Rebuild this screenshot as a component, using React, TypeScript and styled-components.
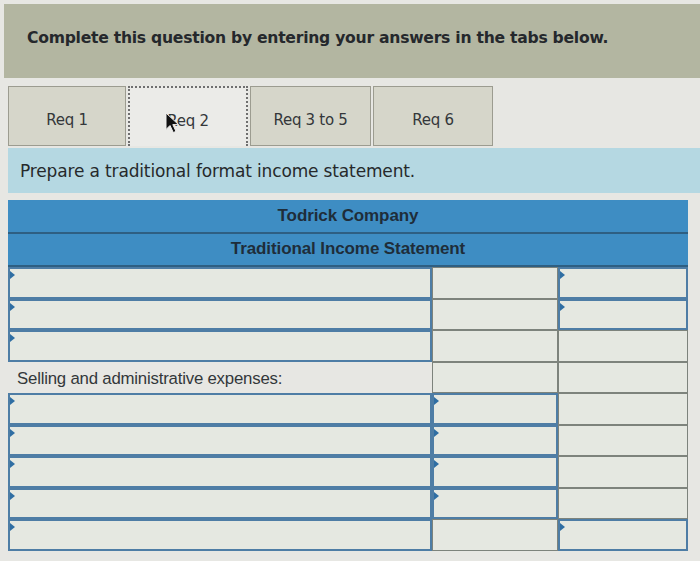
import React from "react";
import styled, { createGlobalStyle } from "styled-components";

const Global = createGlobalStyle`
  html, body { margin: 0; padding: 0; background: #e7e7e3; }
  body { font-family: "Liberation Sans", Arial, sans-serif; }
`;

const Page = styled.div`
  width: 700px;
  height: 561px;
  overflow: hidden;
  background: #e7e7e3;
  padding-top: 4px;
  box-sizing: border-box;
`;

const Banner = styled.div`
  margin-left: 4px;
  height: 74px;
  background: #b3b6a1;
  display: flex;
  align-items: center;
  padding-left: 23px;
  padding-bottom: 6px;
  box-sizing: border-box;
  font-family: "DejaVu Sans", Verdana, sans-serif;
  font-weight: bold;
  font-size: 15.6px;
  letter-spacing: -0.25px;
  color: #25282c;
`;

const Tabs = styled.div`
  display: flex;
  gap: 2px;
  margin: 8px 0 0 8px;
`;

const Tab = styled.div<{ $w: number; $active?: boolean }>`
  width: ${(p) => p.$w}px;
  height: 60px;
  box-sizing: border-box;
  display: flex;
  align-items: center;
  justify-content: center;
  padding-top: 8px;
  font-family: "DejaVu Sans", Verdana, sans-serif;
  font-size: 15px;
  letter-spacing: -0.3px;
  color: #34373a;
  background: ${(p) => (p.$active ? "#ebebe8" : "#d6d6ca")};
  border: ${(p) => (p.$active ? "2px dotted #6f6f6f" : "1px solid #9c9c90")};
  border-bottom: ${(p) => (p.$active ? "none" : "1px solid #9c9c90")};
  position: relative;
`;

const Cursor = styled.svg`
  position: absolute;
  left: 35px;
  top: 24px;
`;

const Instruction = styled.div`
  margin: 2px 0 0 8px;
  height: 45px;
  background: #b5d8e2;
  display: flex;
  align-items: center;
  padding-left: 12px;
  font-family: "DejaVu Sans", Verdana, sans-serif;
  font-size: 17px;
  letter-spacing: -0.15px;
  color: #26292b;
`;

const Table = styled.div`
  margin: 7px 0 0 8px;
  width: 680px;
`;

const HeaderRow = styled.div`
  height: 33.5px;
  background: #3e8dc3;
  display: flex;
  align-items: center;
  justify-content: center;
  font-weight: bold;
  font-size: 17px;
  color: #1e2d3a;
  border-bottom: 2px solid #2e5f82;
  box-sizing: border-box;
  letter-spacing: -0.1px;
`;

const Row = styled.div`
  display: grid;
  grid-template-columns: 424px 126px 130px;
  height: 31.5px;
`;

const Cell = styled.div<{ $input?: boolean }>`
  position: relative;
  box-sizing: border-box;
  background: #e5e8e1;
  border: ${(p) => (p.$input ? "2px solid #4e7da5" : "1px solid #7d837c")};
  ${(p) =>
    p.$input &&
    `&::before {
      content: "";
      position: absolute;
      left: 0;
      top: 2px;
      border-left: 5px solid #2f6ea3;
      border-top: 4px solid transparent;
      border-bottom: 4px solid transparent;
    }`}
`;

const Label = styled.div`
  display: flex;
  align-items: center;
  padding-left: 9px;
  padding-top: 3px;
  font-size: 16.8px;
  color: #33373a;
  letter-spacing: -0.2px;
  white-space: nowrap;
`;

type Kind = "i" | "p";
const rows: { label?: string; cells: Kind[] }[] = [
  { cells: ["i", "p", "i"] },
  { cells: ["i", "p", "i"] },
  { cells: ["i", "p", "p"] },
  { label: "Selling and administrative expenses:", cells: ["p", "p"] },
  { cells: ["i", "i", "p"] },
  { cells: ["i", "i", "p"] },
  { cells: ["i", "i", "p"] },
  { cells: ["i", "i", "p"] },
  { cells: ["i", "p", "i"] },
];

export default function App() {
  return (
    <>
      <Global />
      <Page>
        <Banner>Complete this question by entering your answers in the tabs below.</Banner>
        <Tabs>
          <Tab $w={118}>Req 1</Tab>
          <Tab $w={120} $active>
            Req 2
            <Cursor width="16" height="22" viewBox="0 0 16 22">
              <path d="M1 1 L1 17.5 L5 13.5 L8.3 20.5 L11 19.4 L7.8 12.6 L13.5 12.6 Z" fill="#111" stroke="#eee" strokeWidth="1" />
            </Cursor>
          </Tab>
          <Tab $w={121}>Req 3 to 5</Tab>
          <Tab $w={120}>Req 6</Tab>
        </Tabs>
        <Instruction>Prepare a traditional format income statement.</Instruction>
        <Table>
          <HeaderRow>Todrick Company</HeaderRow>
          <HeaderRow>Traditional Income Statement</HeaderRow>
          {rows.map((r, i) => (
            <Row key={i}>
              {r.label ? <Label>{r.label}</Label> : null}
              {r.cells.map((c, j) => (
                <Cell key={j} $input={c === "i"} />
              ))}
            </Row>
          ))}
        </Table>
      </Page>
    </>
  );
}
